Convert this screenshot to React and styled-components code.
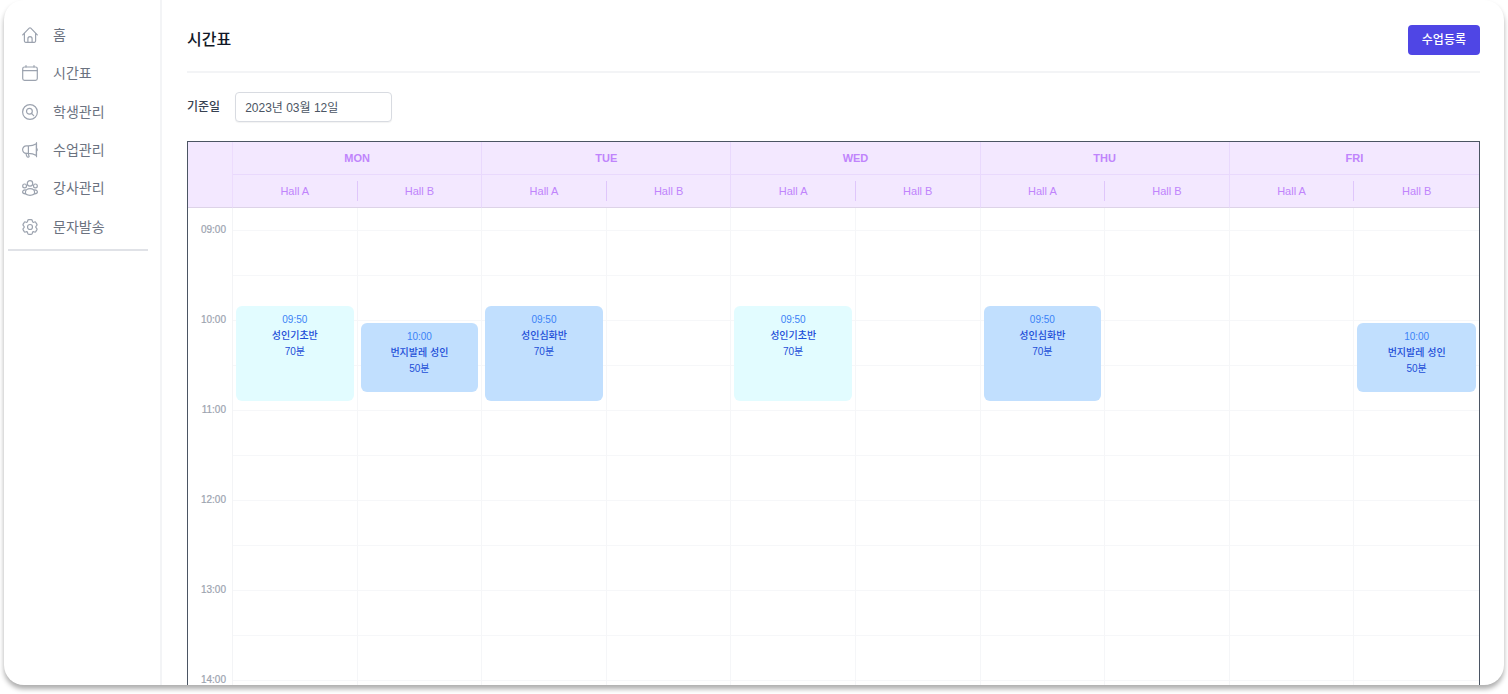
import React from "react";
import styled, { createGlobalStyle } from "styled-components";

const Global = createGlobalStyle`
  *, *::before, *::after { box-sizing: border-box; }
  body {
    margin: 0;
    background: #fff;
    color: #111827;
    font-family: "Liberation Sans", "Noto Sans CJK KR", sans-serif;
    overflow: hidden;
  }
`;

const Shell = styled.div`
  display: flex;
  height: calc(100vh - 9px);
  margin: 0 4px 9px;
  border-radius: 20px;
  overflow: hidden;
  background: #fff;
  box-shadow: 0 4px 5px rgba(0, 0, 0, 0.32);
`;

const Sidebar = styled.aside`
  flex: 0 0 158px;
  padding: 16px 12px 0 4px;
  border-right: 2px solid #f3f4f6;
`;

const Menu = styled.ul`
  display: grid;
  grid-auto-rows: 1fr;
  height: 230px;
  margin: 0 0 3px;
  padding: 0;
  list-style: none;
`;

const MenuLink = styled.a`
  display: flex;
  align-items: center;
  gap: 15px;
  height: 100%;
  padding-left: 14px;
  color: #6b7280;
  font-size: 14px;
  line-height: 20px;
  text-decoration: none;
`;

const Icon = styled.svg`
  flex: none;
  width: 16px;
  height: 16px;
  fill: none;
  stroke: #9ca3af;
  stroke-width: 1.2;
  stroke-linecap: round;
  stroke-linejoin: round;
`;

const Divider = styled.hr`
  height: 2px;
  margin: 0;
  border: 0;
  background: #e0e2e7;
`;

const Main = styled.main`
  flex: 1;
  min-width: 0;
  padding: 0 24px 0 25px;
`;

const Header = styled.header`
  display: flex;
  align-items: center;
  justify-content: space-between;
  height: 73px;
  padding-top: 9px;
  border-bottom: 2px solid #f3f4f6;
`;

const Title = styled.h1`
  margin: 0;
  font-size: 16px;
  line-height: 24px;
  font-weight: 500;
`;

const Button = styled.button`
  height: 30px;
  padding: 1px 14px 0;
  border: 0;
  border-radius: 4px;
  background: #4f46e5;
  color: #fff;
  font: 500 12px/29px "Liberation Sans", "Noto Sans CJK KR", sans-serif;
`;

const Filter = styled.div`
  display: flex;
  align-items: center;
  gap: 15px;
  padding: 19px 0;
`;

const Label = styled.label`
  color: #374151;
  font-size: 12px;
  line-height: 16px;
  font-weight: 500;
`;

const DateInput = styled.input`
  width: 157px;
  height: 30px;
  padding: 0 9px 2px;
  border: 1px solid #d8dbe1;
  border-radius: 4px;
  background: #fff;
  box-shadow: 0 1px 1px rgba(0, 0, 0, 0.05);
  color: #4b5563;
  font: 12px/16px "Liberation Sans", "Noto Sans CJK KR", sans-serif;
`;

const Frame = styled.div`
  border: 1px solid #4b5563;
`;

const Table = styled.table`
  width: 100%;
  table-layout: fixed;
  border-collapse: separate;
  border-spacing: 0;
`;

const TimeCol = styled.col`
  width: 45px;
`;

const Corner = styled.td`
  padding: 0;
  border-right: 1px solid #ecdcfd;
  border-bottom: 1px solid #ddd3e8;
  background: #f3e8ff;
`;

const DayHead = styled.th`
  height: 33px;
  padding: 0;
  border-right: ${(p) => (p.$last ? "0" : "1px solid #e9d9fd")};
  border-bottom: 1px solid #e9d9fd;
  background: #f3e8ff;
  color: #c084fc;
  font-size: 11px;
  line-height: 16px;
  font-weight: 700;
`;

const HallHead = styled.th`
  height: 33px;
  padding: 0;
  border-right: ${(p) => (p.$dayEnd ? "1px solid #e9d9fd" : "0")};
  border-bottom: 1px solid #ddd3e8;
  background: #f3e8ff;
  color: #c084fc;
  font-size: 11px;
  line-height: 20px;
  font-weight: 400;
`;

const HallName = styled.span`
  display: block;
  border-right: ${(p) => (p.$split ? "1px solid #dfc6fb" : "0")};
`;

const TimeHead = styled.th`
  height: ${(p) => (p.$lead ? 22 : 45)}px;
  padding: 0 6px 0 0;
  border-right: 1px solid #f3f4f6;
  vertical-align: top;
  text-align: right;
  color: #9ca3af;
  font-size: 10px;
  line-height: 16px;
  font-weight: 400;
`;

const TimeText = styled.time`
  display: block;
  margin-top: -8px;
  -webkit-text-stroke: 0.2px #9ca3af;
`;

const Slot = styled.td`
  position: relative;
  padding: 0;
  border-top: ${(p) => (p.$lead ? "0" : "1px solid #f6f7f9")};
  border-right: ${(p) => (p.$last ? "0" : "1px solid #f5f6f8")};
`;

const Lesson = styled.article`
  position: absolute;
  z-index: 1;
  left: 3px;
  right: 3px;
  padding-top: 6px;
  border-radius: 6px;
  background: ${(p) => (p.$tone === "cyan" ? "#e2fcff" : "#c1dffe")};
  color: #1d4ed8;
  text-align: center;
  font-size: 10px;
  line-height: 16px;
`;

const LessonTime = styled.time`
  display: block;
  color: #3b82f6;
`;

const LessonName = styled.strong`
  display: block;
  font-weight: 500;
`;

const LessonLength = styled.span`
  display: block;
`;

const icons = {
  home: (
    <>
      <path d="M.7 7.9 7.2 1.2a1.1 1.1 0 0 1 1.6 0l6.5 6.7M2.4 6.4v7.7c0 .7.5 1.2 1.2 1.2h8.8c.7 0 1.2-.5 1.2-1.2V6.4" />
      <path d="M5.9 15.2v-3.5a2.1 2.1 0 0 1 4.2 0v3.5" />
    </>
  ),
  calendar: (
    <>
      <rect x=".7" y="2" width="14.6" height="13.3" rx="1.8" />
      <path d="M.7 5.6h14.6M4 .6V2M12 .6V2" />
    </>
  ),
  search: (
    <>
      <circle cx="8" cy="8" r="7.4" />
      <circle cx="7.4" cy="7.2" r="2.9" />
      <path d="m9.5 9.3 2.2 2.3" />
    </>
  ),
  megaphone: (
    <>
      <path d="M6.4 3.9H4.3a3.7 3.7 0 0 0 0 7.4h2.1zM6.4 3.9c3.200 0 5.600-.7 8-2.100v11.800c-2.400-1.500-4.800-2.300-8-2.300" />
      <path d="M14.500.7v14M14.500 6.300c1 .5 1 2.200 0 2.700M4.100 11.400c0 1.300.4 2.300 1 3.300.4.800 2.300.5 2-.4-.5-1-.7-1.900-.7-2.900" />
    </>
  ),
  people: (
    <>
      <circle cx="8" cy="3.400" r="2.700" />
      <circle cx="2.600" cy="5.900" r="1.900" />
      <circle cx="13.400" cy="5.900" r="1.900" />
      <path d="M8 8.700c-2.700 0-4.600 1.700-4.600 3.900 0 1.700 1.600 2.700 4.600 2.700s4.600-1 4.600-2.700c0-2.200-1.900-3.900-4.600-3.900Z" />
      <path d="M3.400 9.900C1.600 9.800.6 10.700.6 12c0 1.100.9 1.700 2.800 1.800M12.600 9.900c1.800-.1 2.800.8 2.800 2.100 0 1.100-.9 1.700-2.800 1.800" />
    </>
  ),
  gear: (
    <>
      <path d="M6.900.7h2.200q1 0 1.200 1l.2.900q.2.600.8.700l1.300-.3q.9-.2 1.300.6l.9 1.500q.5.900-.2 1.600l-.6.600q-.4.700 0 1.400l.6.600q.7.700.2 1.600l-.9 1.500q-.4.800-1.300.6l-1.300-.3q-.6.100-.8.700l-.2.900q-.2 1-1.200 1H6.900q-1 0-1.200-1l-.2-.9q-.2-.6-.8-.7l-1.300.3q-.9.200-1.300-.6l-.9-1.500q-.5-.9.200-1.600l.6-.6q.4-.7 0-1.400l-.6-.6q-.7-.7-.2-1.600l.9-1.500q.4-.8 1.300-.6l1.300.3q.6-.1.800-.7l.2-.9q.2-1 1.200-1Z" />
      <circle cx="8" cy="8" r="2.500" />
    </>
  ),
};

const menu = [
  ["home", "홈"],
  ["calendar", "시간표"],
  ["search", "학생관리"],
  ["megaphone", "수업관리"],
  ["people", "강사관리"],
  ["gear", "문자발송"],
];

const days = ["MON", "TUE", "WED", "THU", "FRI"];
const columns = days.flatMap((day) => [
  { day, hall: "A" },
  { day, hall: "B" },
]);

const slots = ["09:00", "09:30", "10:00", "10:30", "11:00", "11:30", "12:00", "12:30", "13:00", "13:30", "14:00"];

const basic = { slot: "09:30", offset: 30, height: 95, time: "09:50", name: "성인기초반", length: "70분", tone: "cyan" };
const advanced = { ...basic, name: "성인심화반", tone: "blue" };
const bungee = { slot: "10:00", offset: 2, height: 69, time: "10:00", name: "번지발레 성인", length: "50분", tone: "blue" };

const lessons = {
  MONA: basic,
  MONB: bungee,
  TUEA: advanced,
  WEDA: basic,
  THUA: advanced,
  FRIB: bungee,
};

function LessonCard({ lesson }) {
  return (
    <Lesson $tone={lesson.tone} style={{ top: lesson.offset, height: lesson.height }}>
      <LessonTime>{lesson.time}</LessonTime>
      <LessonName>{lesson.name}</LessonName>
      <LessonLength>{lesson.length}</LessonLength>
    </Lesson>
  );
}

function Timetable() {
  const last = columns.length - 1;
  return (
    <Frame>
      <Table>
        <colgroup>
          <TimeCol />
          {columns.map((c) => (
            <col key={c.day + c.hall} />
          ))}
        </colgroup>
        <thead>
          <tr>
            <Corner rowSpan={2} />
            {days.map((day, i) => (
              <DayHead key={day} colSpan={2} scope="colgroup" $last={i === days.length - 1}>
                {day}
              </DayHead>
            ))}
          </tr>
          <tr>
            {columns.map((c, i) => (
              <HallHead key={c.day + c.hall} scope="col" $dayEnd={c.hall === "B" && i !== last}>
                <HallName $split={c.hall === "A"}>Hall {c.hall}</HallName>
              </HallHead>
            ))}
          </tr>
        </thead>
        <tbody>
          <tr>
            <TimeHead as="td" $lead />
            {columns.map((c, i) => (
              <Slot key={c.day + c.hall} $lead $last={i === last} />
            ))}
          </tr>
          {slots.map((slot) => (
            <tr key={slot}>
              <TimeHead scope="row">{slot.endsWith(":00") && <TimeText>{slot}</TimeText>}</TimeHead>
              {columns.map((c, i) => {
                const lesson = lessons[c.day + c.hall];
                return (
                  <Slot key={c.day + c.hall} $last={i === last}>
                    {lesson && lesson.slot === slot && <LessonCard lesson={lesson} />}
                  </Slot>
                );
              })}
            </tr>
          ))}
        </tbody>
      </Table>
    </Frame>
  );
}

export default function App() {
  return (
    <>
      <Global />
      <Shell>
        <Sidebar>
          <nav>
            <Menu>
              {menu.map(([icon, text]) => (
                <li key={icon}>
                  <MenuLink href="#">
                    <Icon viewBox="0 0 16 16" aria-hidden="true">
                      {icons[icon]}
                    </Icon>
                    {text}
                  </MenuLink>
                </li>
              ))}
            </Menu>
          </nav>
          <Divider />
        </Sidebar>
        <Main>
          <Header>
            <Title>시간표</Title>
            <Button type="button">수업등록</Button>
          </Header>
          <Filter>
            <Label htmlFor="base-date">기준일</Label>
            <DateInput id="base-date" type="text" defaultValue="2023년 03월 12일" />
          </Filter>
          <Timetable />
        </Main>
      </Shell>
    </>
  );
}
